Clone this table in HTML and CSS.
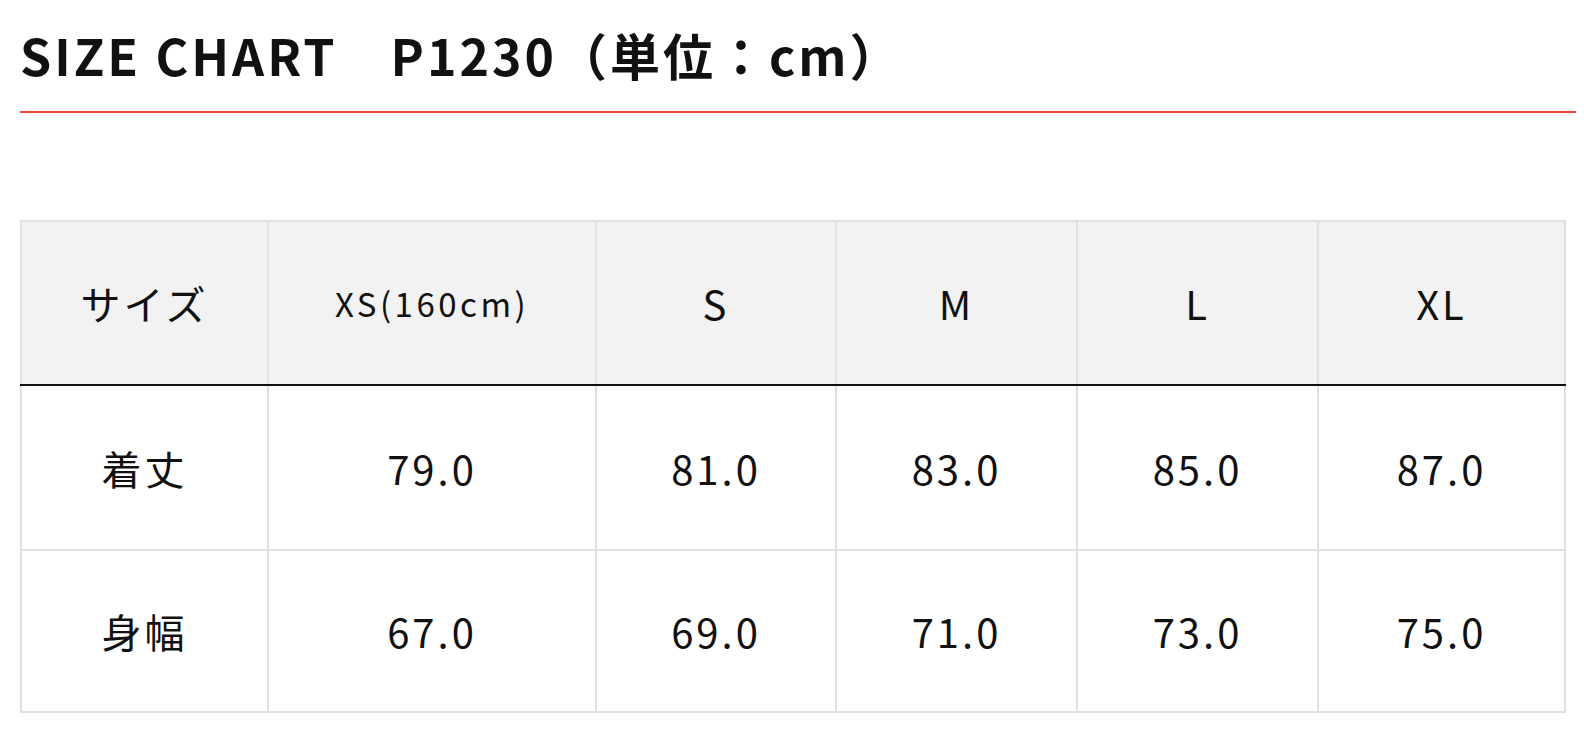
FILE: index.html
```html
<!DOCTYPE html>
<html lang="ja">
<head>
<meta charset="utf-8">
<link rel="stylesheet" href="styles.css">
</head>
<body>
<div class="page">
  <h1 class="title">SIZE CHART　P1230（単位：cm）</h1>
  <div class="rule"></div>
  <table class="chart">
    <colgroup>
      <col class="c0"><col class="c1"><col class="c2"><col class="c3"><col class="c4"><col class="c5">
    </colgroup>
    <thead>
      <tr class="r-head">
        <th>サイズ</th>
        <th class="xs">XS(160cm)</th>
        <th>S</th>
        <th>M</th>
        <th>L</th>
        <th>XL</th>
      </tr>
    </thead>
    <tbody>
      <tr class="r-1">
        <td>着丈</td><td>79.0</td><td>81.0</td><td>83.0</td><td>85.0</td><td>87.0</td>
      </tr>
      <tr class="r-2">
        <td>身幅</td><td>67.0</td><td>69.0</td><td>71.0</td><td>73.0</td><td>75.0</td>
      </tr>
    </tbody>
  </table>
</div>
</body>
</html>
```
FILE: styles.css
```css
html, body {
  margin: 0;
  padding: 0;
  background: #ffffff;
}
.page {
  padding: 0 8px 0 20px;
  font-family: "Noto Sans CJK JP", "Noto Sans", sans-serif;
  color: #111111;
}
.title {
  margin: 0;
  padding-top: 24px;
  font-size: 50px;
  line-height: 60px;
  font-weight: 700;
  letter-spacing: 3px;
  white-space: nowrap;
}
.rule {
  margin-top: 27px;
  height: 2px;
  background: #e8473a;
}
.chart {
  margin-top: 107px;
  width: 1544px;
  border-collapse: collapse;
  table-layout: fixed;
}
.c0 { width: 247px; }
.c1 { width: 328px; }
.c2 { width: 240px; }
.c3 { width: 241px; }
.c4 { width: 241px; }
.c5 { width: 247px; }
.chart th,
.chart td {
  border: 2px solid #e0e0e0;
  text-align: center;
  vertical-align: middle;
  font-size: 40px;
  font-weight: 400;
  letter-spacing: 3px;
  padding: 0;
}
.r-head th { height: 162px; }
.r-1 td { height: 163px; }
.r-2 td { height: 160px; }
.chart thead th {
  background: #f2f2f2;
  border-bottom: 2px solid #111111;
}
.chart th.xs {
  font-size: 33px;
  letter-spacing: 3.5px;
}
```
